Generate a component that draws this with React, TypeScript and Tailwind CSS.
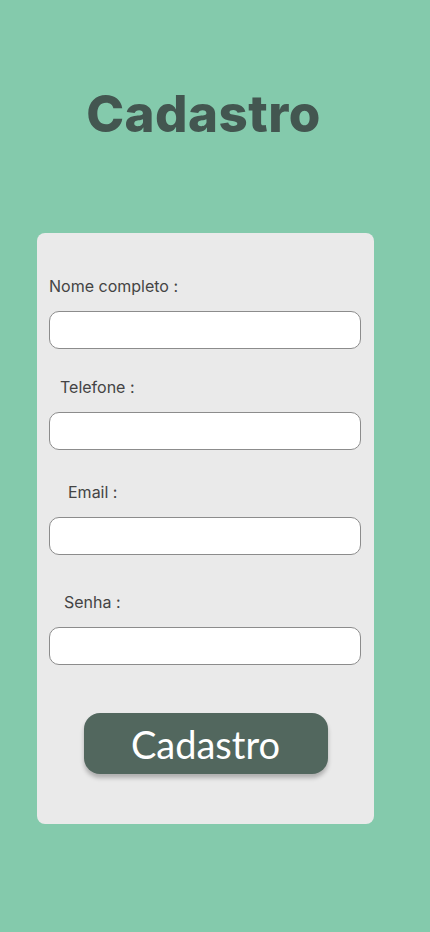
const fields = [
  { label: "Nome completo :", indent: "pl-0", gap: "mt-0" },
  { label: "Telefone :", indent: "pl-[11px]", gap: "mt-[28px]" },
  { label: "Email :", indent: "pl-[19px]", gap: "mt-[32px]" },
  { label: "Senha :", indent: "pl-[15px]", gap: "mt-[37px]" },
];

export default function App() {
  return (
    <div className="min-h-[932px] w-full bg-[#84caac] font-['Inter',sans-serif]">
      <div className="ml-[37px] w-[337px] pt-[78px] pr-1">
        <h1 className="text-center text-[51px] leading-[72px] font-extrabold tracking-[0.5px] text-[#435650]">
          Cadastro
        </h1>
      </div>

      <form className="ml-[37px] mt-[83px] flex w-[337px] flex-col rounded-lg bg-[#eaeaea] px-3 pt-[43px] pb-[50px]">
        {fields.map((f) => (
          <div key={f.label} className={`flex flex-col ${f.gap}`}>
            <label className={`text-[16px] leading-5 text-[#444444] ${f.indent}`}>
              {f.label}
            </label>
            <input
              type="text"
              className="mt-[15px] h-[38px] w-[312px] rounded-[10px] border border-[#8c8c8c] bg-white"
            />
          </div>
        ))}

        <button
          type="button"
          className="mx-auto mt-12 h-[61px] w-[244px] rounded-2xl bg-[#52675e] text-[38px] leading-none text-white shadow-[0_4px_4px_rgba(0,0,0,0.25)] font-['Lato',sans-serif]"
        >
          Cadastro
        </button>
      </form>
    </div>
  );
}
